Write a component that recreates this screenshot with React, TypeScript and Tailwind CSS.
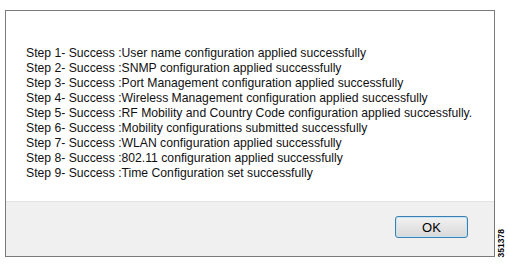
import React from 'react';

const steps: string[] = [
    'Step 1- Success :User name configuration applied successfully',
    'Step 2- Success :SNMP configuration applied successfully',
    'Step 3- Success :Port Management configuration applied successfully',
    'Step 4- Success :Wireless Management configuration applied successfully',
    'Step 5- Success :RF Mobility and Country Code configuration applied successfully.',
    'Step 6- Success :Mobility configurations submitted successfully',
    'Step 7- Success :WLAN configuration applied successfully',
    'Step 8- Success :802.11 configuration applied successfully',
    'Step 9- Success :Time Configuration set successfully',
];

const App: React.FC = () => {
    return (
        <div className="w-[508px] h-[268px] bg-white flex font-['Liberation_Sans',Arial,sans-serif] text-black">
            <div className="ml-[5px] mt-[10px] w-[490px] h-[247px] border border-[#7a7a7a] flex flex-col">
                {/* Messages */}
                <div className="h-[190px] bg-white pl-[20px] pt-[35px] text-[12.2px] leading-[15px] text-[#111]">
                    {steps.map((s, i) => (
                        <div key={i} className="whitespace-nowrap">{s}</div>
                    ))}
                </div>
                {/* Footer */}
                <div className="flex-1 bg-[#f0f0f0] border-t border-[#e3e3e3] flex justify-end items-start pt-[14px] pr-[26px]">
                    <button className="w-[73px] h-[22px] rounded-[3px] border border-[#3c7fb1] bg-gradient-to-b from-[#f2f2f2] to-[#d8d8d8] text-[13px] leading-none text-black shadow-[inset_0_0_0_1px_#c4e5f6]">
                        OK
                    </button>
                </div>
            </div>
            <div className="flex-1 flex items-end justify-center pb-[11px]">
                <span className="[writing-mode:vertical-rl] rotate-180 text-[8.5px] font-bold leading-none text-black">351378</span>
            </div>
        </div>
    );
};

export default App;
